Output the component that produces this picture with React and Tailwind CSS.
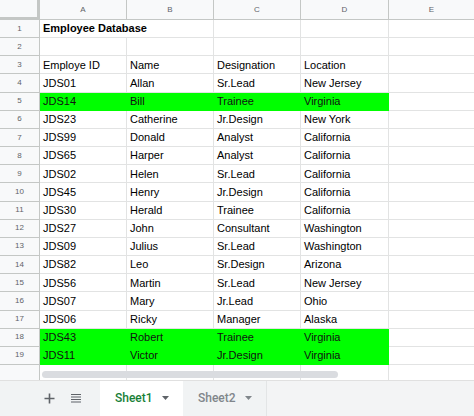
import { useState } from "react";

const rows = [
  ["Employee Database", "", "", "", "title"],
  ["", "", "", ""],
  ["Employe ID", "Name", "Designation", "Location"],
  ["JDS01", "Allan", "Sr.Lead", "New Jersey"],
  ["JDS14", "Bill", "Trainee", "Virginia", "green"],
  ["JDS23", "Catherine", "Jr.Design", "New York"],
  ["JDS99", "Donald", "Analyst", "California"],
  ["JDS65", "Harper", "Analyst", "California"],
  ["JDS02", "Helen", "Sr.Lead", "California"],
  ["JDS45", "Henry", "Jr.Design", "California"],
  ["JDS30", "Herald", "Trainee", "California"],
  ["JDS27", "John", "Consultant", "Washington"],
  ["JDS09", "Julius", "Sr.Lead", "Washington"],
  ["JDS82", "Leo", "Sr.Design", "Arizona"],
  ["JDS56", "Martin", "Sr.Lead", "New Jersey"],
  ["JDS07", "Mary", "Jr.Lead", "Ohio"],
  ["JDS06", "Ricky", "Manager", "Alaska"],
  ["JDS43", "Robert", "Trainee", "Virginia", "green"],
  ["JDS11", "Victor", "Jr.Design", "Virginia", "green"],
];

const widths = ["w-[87px]", "w-[87px]", "w-[87px]", "w-[88px]"];

function Caret({ className }) {
  return (
    <svg width="7" height="4" viewBox="0 0 7 4" className={className}>
      <path d="M0 0 L7 0 L3.5 4 Z" fill="currentColor" />
    </svg>
  );
}

export default function App() {
  const [active] = useState(0);

  return (
    <div
      className="w-[474px] h-[416px] overflow-hidden bg-white flex flex-col text-[11px] text-black"
      style={{ fontFamily: '"Liberation Sans", Arial, sans-serif' }}
    >
      {/* column letters */}
      <div className="flex h-[20px] shrink-0 bg-[#f8f9fa] text-[8px] text-[#5f6368]">
        <div className="w-[40px] shrink-0 border-r-[3px] border-b-[3px] border-[#c4c7c5] bg-[#f8f9fa]" />
        {["A", "B", "C", "D"].map((l, i) => (
          <div
            key={l}
            className={`${widths[i]} shrink-0 flex items-center justify-center border-r border-b border-[#c4c7c5]`}
          >
            {l}
          </div>
        ))}
        <div className="flex-1 flex items-center justify-center border-b border-[#c4c7c5]">E</div>
      </div>

      {/* rows */}
      {rows.map((r, idx) => {
        const green = r[4] === "green";
        const title = r[4] === "title";
        return (
          <div key={idx} className="flex h-[18.16px] shrink-0">
            <div className="w-[40px] shrink-0 flex items-center justify-center bg-[#f8f9fa] border-r border-b border-[#c4c7c5] text-[8px] text-[#5f6368]">
              {idx + 1}
            </div>
            {title ? (
              <div className="w-[174px] shrink-0 flex items-center pl-[3px] font-bold border-r border-b border-[#e2e3e3]">
                {r[0]}
              </div>
            ) : null}
            {[0, 1, 2, 3].map((c) => {
              if (title && c < 2) return null;
              const txt = title ? "" : r[c];
              return (
                <div
                  key={c}
                  className={`${widths[c]} shrink-0 flex items-center pl-[3px] border-b border-r ${
                    green ? "bg-[#00ff00] border-[#00ff00] text-[#111]" : "border-[#e2e3e3]"
                  }`}
                >
                  {txt}
                </div>
              );
            })}
            <div className="flex-1 border-b border-[#e2e3e3]" />
          </div>
        );
      })}

      {/* partial row 20 + horizontal scrollbar */}
      <div className="relative flex h-[15px] shrink-0">
        <div className="w-[40px] shrink-0 bg-[#f8f9fa] border-r border-[#c4c7c5]" />
        {[0, 1, 2, 3].map((c) => (
          <div key={c} className={`${widths[c]} shrink-0 border-r border-[#e2e3e3]`} />
        ))}
        <div className="flex-1" />
        <div className="absolute left-[42px] top-[6px] w-[296px] h-[7px] rounded-full bg-[#dadce0]" />
      </div>

      {/* sheet tabs */}
      <div className="flex flex-1 bg-[#f1f3f4] border-t border-[#e0e0e0] text-[12px]">
        <div className="w-[100px] shrink-0 flex items-center gap-[16px] pl-[44px] text-[#5f6368]">
          <svg width="11" height="11" viewBox="0 0 11 11">
            <path d="M5.5 0.5 V10.5 M0.5 5.5 H10.5" stroke="currentColor" strokeWidth="1.6" />
          </svg>
          <svg width="10" height="10" viewBox="0 0 10 10">
            <path d="M0 1.5 H10 M0 4 H10 M0 6.5 H10 M0 9 H10" stroke="currentColor" strokeWidth="1.2" />
          </svg>
        </div>
        <div
          className={`w-[83px] shrink-0 flex items-center pl-[15px] gap-[9px] ${
            active === 0 ? "bg-white text-[#188038]" : "text-[#5f6368]"
          } font-medium`}
          style={{ fontFamily: 'Roboto, "Liberation Sans", sans-serif' }}
        >
          <span>Sheet1</span>
          <Caret className="text-[#5f6368]" />
        </div>
        <div
          className="w-[84px] shrink-0 flex items-center pl-[15px] gap-[9px] text-[#80868b] font-medium border-r border-[#e3e5e6]"
          style={{ fontFamily: 'Roboto, "Liberation Sans", sans-serif' }}
        >
          <span>Sheet2</span>
          <Caret className="text-[#80868b]" />
        </div>
        <div className="flex-1 bg-[#f3f4f5]" />
      </div>
    </div>
  );
}
